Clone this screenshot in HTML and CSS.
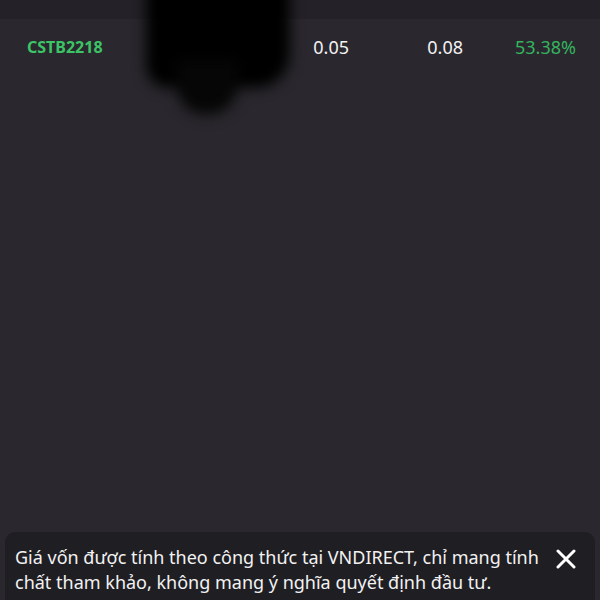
FILE: index.html
```html
<!DOCTYPE html>
<html lang="vi">
<head>
    <meta charset="UTF-8">
    <meta name="viewport" content="width=device-width, initial-scale=1.0">
    <title>Danh mục</title>
    <link rel="stylesheet" href="styles.css">
</head>
<body>
    <div class="screen">
        <div class="list">
            <div class="row row-prev">
                <span class="symbol">CSTB2217</span>
                <span class="num">0.04</span>
                <span class="num">0.06</span>
                <span class="pct">41.20%</span>
            </div>
            <div class="row">
                <span class="symbol">CSTB2218</span>
                <span class="num">0.05</span>
                <span class="num">0.08</span>
                <span class="pct">53.38%</span>
            </div>
        </div>

        <div class="smudge">
            <div class="smudge-main"></div>
            <div class="smudge-tail"></div>
        </div>

        <div class="toast">
            <p class="toast-text">Giá vốn được tính theo công thức tại VNDIRECT, chỉ mang tính chất tham khảo, không mang ý nghĩa quyết định đầu tư.</p>
            <button class="toast-close" aria-label="Đóng">
                <svg width="20" height="20" viewBox="0 0 20 20">
                    <path d="M2 2 L18 18 M18 2 L2 18" stroke="#fff" stroke-width="3" stroke-linecap="round"/>
                </svg>
            </button>
        </div>
    </div>
</body>
</html>
```

FILE: styles.css
```css
body {
    margin: 0;
    background-color: #2a282e;
    font-family: "Noto Sans", "Open Sans", sans-serif;
    color: #f2f2f2;
    overflow: hidden;
}
.screen {
    position: relative;
    height: 600px;
    display: flex;
    flex-direction: column;
}
.list {
    margin-top: -37px;
}
.row {
    display: grid;
    grid-template-columns: 1fr 80px 114px 113px;
    align-items: center;
    height: 56px;
    padding: 0 24px 0 27px;
}
.row-prev {
    background-color: #242228;
}
.symbol {
    color: #3cc466;
    font-weight: bold;
    font-size: 16px;
}
.num, .pct {
    text-align: right;
    font-size: 18px;
}
.pct {
    color: #34b45e;
}
.smudge {
    position: absolute;
    top: 0;
    left: 0;
    filter: blur(7px);
}
.smudge-main {
    position: absolute;
    left: 146px;
    top: -20px;
    width: 144px;
    height: 108px;
    background-color: #000;
    border-radius: 0 0 34px 22px;
}
.smudge-tail {
    position: absolute;
    left: 176px;
    top: 60px;
    width: 62px;
    height: 55px;
    background-color: #060606;
    border-radius: 0 0 30px 30px;
}
.toast {
    margin: auto 5px 0;
    height: 55px;
    padding: 13px 19px 0 10px;
    background-color: #1f1e23;
    border-radius: 10px 10px 0 0;
    display: flex;
    align-items: flex-start;
}
.toast-text {
    flex: 1;
    margin: 0;
    font-size: 18px;
    line-height: 25px;
}
.toast-close {
    background: none;
    border: none;
    padding: 0;
    margin: 4px 0 0 15px;
    width: 20px;
    height: 20px;
    cursor: pointer;
}
```
